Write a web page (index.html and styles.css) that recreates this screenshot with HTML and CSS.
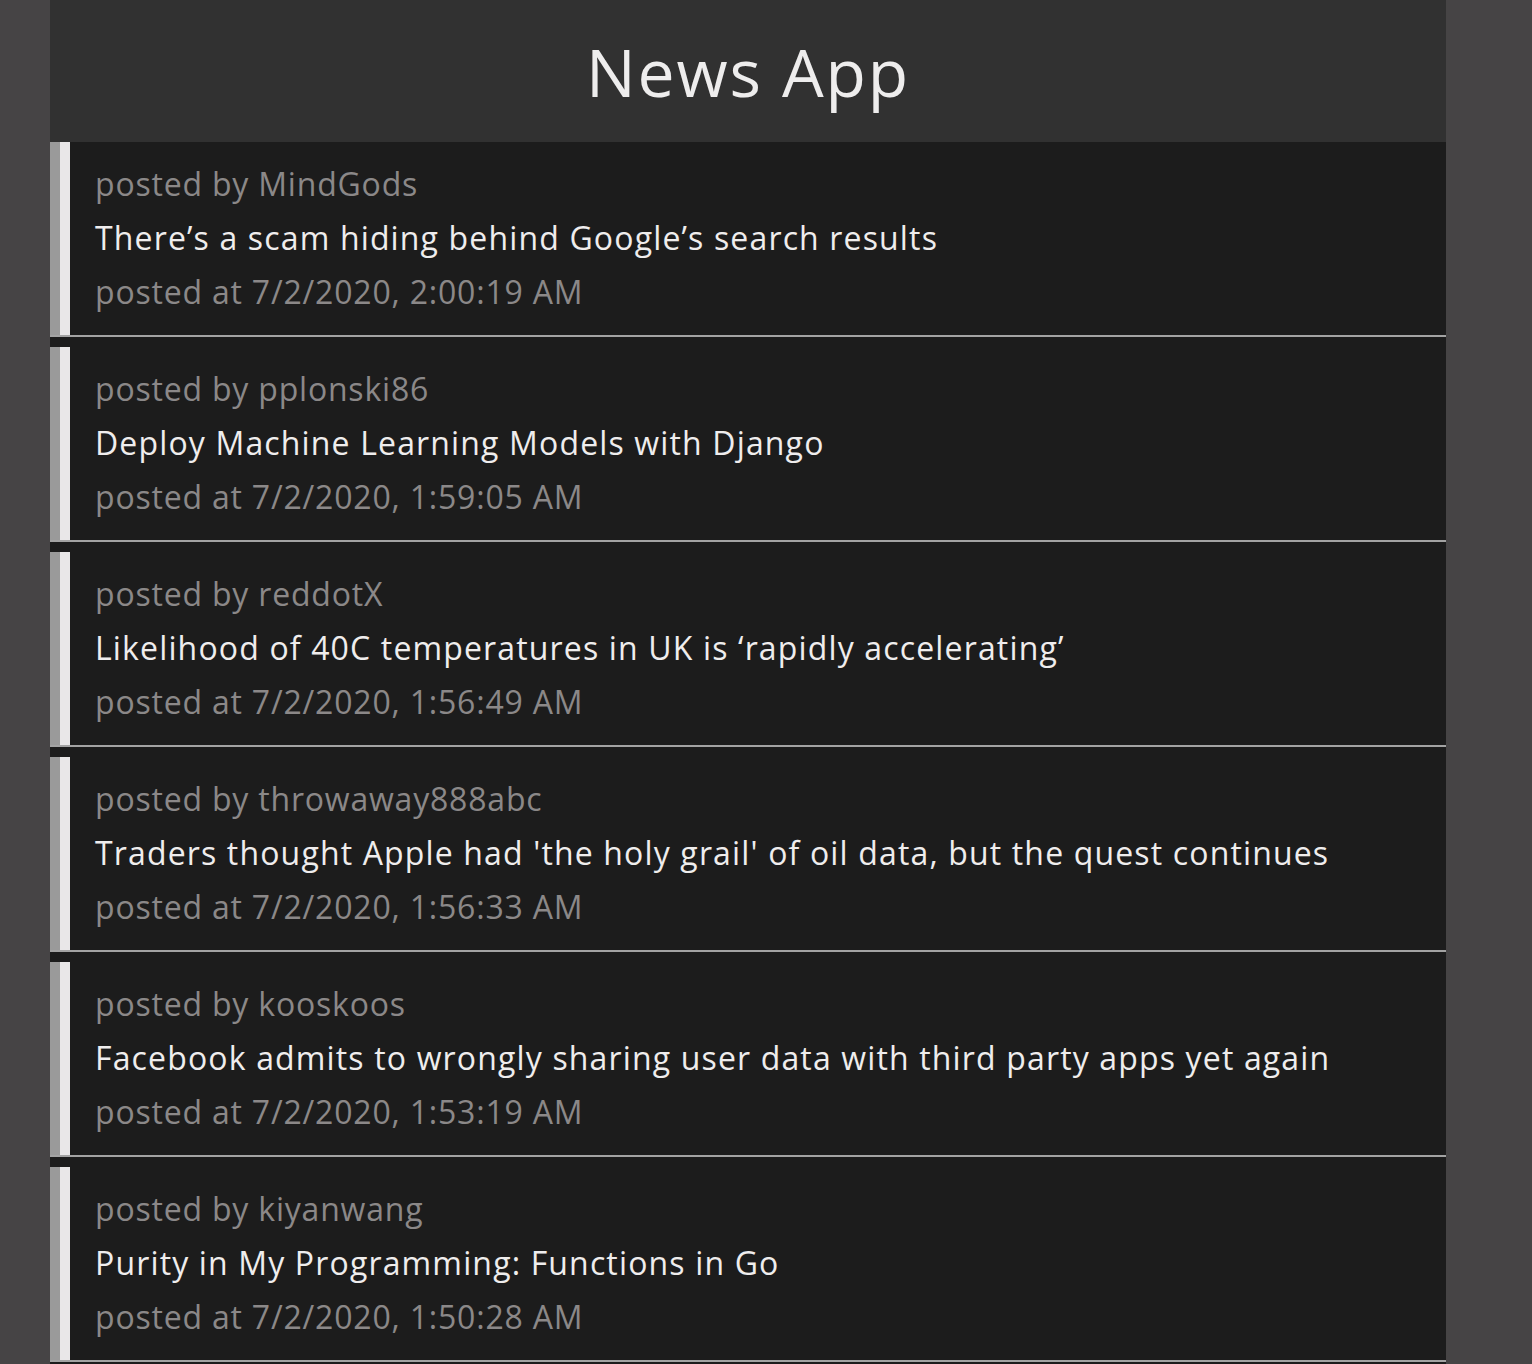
FILE: index.html
```html
<!DOCTYPE html>
<html lang="en">
<head>
<meta charset="utf-8">
<title>News App</title>
<link rel="stylesheet" href="styles.css">
</head>
<body>
<div class="app">
  <header class="app-header">
    <h1 class="app-title">News App</h1>
  </header>
  <ul class="news-list">
    <li class="news-item">
      <div class="stripe">
        <div class="card">
          <p class="meta">posted by MindGods</p>
          <p class="headline">There’s a scam hiding behind Google’s search results</p>
          <p class="meta">posted at 7/2/2020, 2:00:19 AM</p>
        </div>
      </div>
    </li>
    <li class="news-item">
      <div class="stripe">
        <div class="card">
          <p class="meta">posted by pplonski86</p>
          <p class="headline">Deploy Machine Learning Models with Django</p>
          <p class="meta">posted at 7/2/2020, 1:59:05 AM</p>
        </div>
      </div>
    </li>
    <li class="news-item">
      <div class="stripe">
        <div class="card">
          <p class="meta">posted by reddotX</p>
          <p class="headline">Likelihood of 40C temperatures in UK is ‘rapidly accelerating’</p>
          <p class="meta">posted at 7/2/2020, 1:56:49 AM</p>
        </div>
      </div>
    </li>
    <li class="news-item">
      <div class="stripe">
        <div class="card">
          <p class="meta">posted by throwaway888abc</p>
          <p class="headline">Traders thought Apple had 'the holy grail' of oil data, but the quest continues</p>
          <p class="meta">posted at 7/2/2020, 1:56:33 AM</p>
        </div>
      </div>
    </li>
    <li class="news-item">
      <div class="stripe">
        <div class="card">
          <p class="meta">posted by kooskoos</p>
          <p class="headline">Facebook admits to wrongly sharing user data with third party apps yet again</p>
          <p class="meta">posted at 7/2/2020, 1:53:19 AM</p>
        </div>
      </div>
    </li>
    <li class="news-item">
      <div class="stripe">
        <div class="card">
          <p class="meta">posted by kiyanwang</p>
          <p class="headline">Purity in My Programming: Functions in Go</p>
          <p class="meta">posted at 7/2/2020, 1:50:28 AM</p>
        </div>
      </div>
    </li>
  </ul>
</div>
</body>
</html>
```
FILE: styles.css
```css
html, body {
  margin: 0;
  padding: 0;
  background: #464445;
}
body {
  font-family: "Open Sans", "Noto Sans", sans-serif;
  height: 1364px;
  overflow: hidden;
}
.app {
  width: 1396px;
  margin-left: 50px;
  background: #1c1c1c;
  min-height: 1364px;
}
.app-header {
  height: 142px;
  background: #313131;
  display: flex;
  align-items: center;
  justify-content: center;
}
.app-title {
  margin: 0;
  font-size: 66px;
  font-weight: 400;
  color: #eeeded;
  line-height: 1;
  letter-spacing: 1.9px;
}
.news-list {
  list-style: none;
  margin: 0;
  padding: 0;
}
.news-item {
  border-bottom: 2px solid #a3a3a3;
  margin-bottom: 10px;
}
.stripe {
  border-left: 10px solid #9a9a9a;
}
.card {
  border-left: 10px solid #e9e7e8;
  padding: 15px 0 16px 25px;
}
.meta, .headline {
  margin: 0;
  line-height: 54px;
  font-size: 32px;
  white-space: nowrap;
}
.meta {
  color: #8b8888;
  letter-spacing: 0.8px;
}
.headline {
  color: #efeded;
  letter-spacing: 1.15px;
}
```
